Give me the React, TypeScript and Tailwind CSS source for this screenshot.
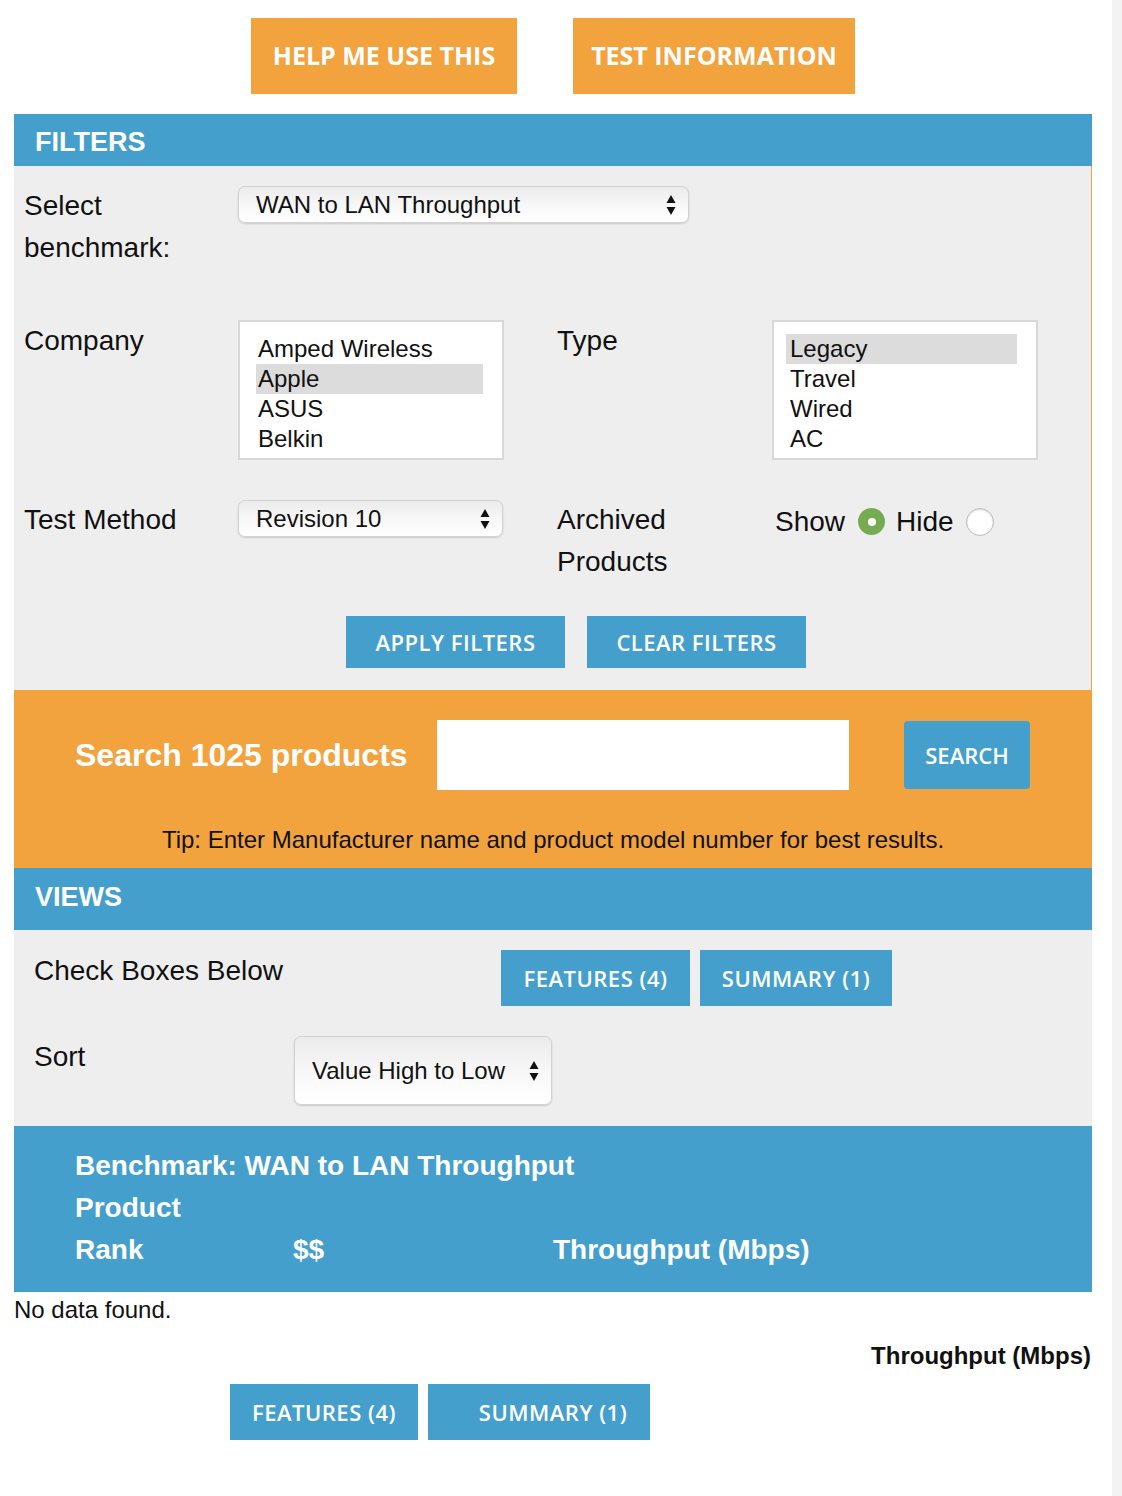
import { FC } from "react";

const SANS = "font-['Liberation_Sans',Arial,sans-serif]";
const BTN = "font-['Open_Sans',sans-serif]";

const Arrows: FC = () => (
  <svg width="10" height="22" viewBox="0 0 10 22" className="shrink-0">
    <path d="M5 1 L9.5 9 L0.5 9 Z" fill="#111" />
    <path d="M0.5 13 L9.5 13 L5 21 Z" fill="#111" />
  </svg>
);

const FakeSelect: FC<{ label: string; className?: string; text?: string }> = ({
  label,
  className = "",
  text = "text-[24px]",
}) => (
  <div
    className={`flex items-center justify-between rounded-[7px] border border-[#d2d2d2] bg-gradient-to-b from-[#ebebeb] via-[#f7f7f7] to-white shadow-[0_1px_2px_rgba(0,0,0,0.15)] pl-[17px] pr-[12px] ${text} ${className}`}
  >
    <span className="leading-none text-[#111]">{label}</span>
    <Arrows />
  </div>
);

const ListBox: FC<{ items: string[]; selected: number; pad: string; item: string }> = ({
  items,
  selected,
  pad,
  item,
}) => (
  <div className={`h-[140px] w-[266px] border-2 border-[#d8d8d8] bg-white pt-[12px] pr-[19px] ${pad}`}>
    {items.map((name, i) => (
      <div
        key={name}
        className={`h-[30px] text-[24px] leading-[30px] text-[#111] ${item} ${i === selected ? "bg-[#dcdcdc]" : ""}`}
      >
        {name}
      </div>
    ))}
  </div>
);

const BlueBtn: FC<{ label: string; className?: string }> = ({ label, className = "" }) => (
  <div
    className={`flex items-center justify-center bg-[#449fcd] text-[22px] font-semibold tracking-[0.5px] text-white ${BTN} ${className}`}
  >
    {label}
  </div>
);

const Header: FC<{ title: string; className?: string }> = ({ title, className = "" }) => (
  <div className={`flex items-center bg-[#449fcd] pl-[21px] text-[27px] font-bold text-white ${className}`}>
    {title}
  </div>
);

export default function App() {
  return (
    <div className={`flex min-h-[1496px] w-[1122px] bg-white ${SANS} text-[#111]`}>
      <div className="w-[1112px] pl-[14px] pr-[20px]">
        {/* top buttons */}
        <div className="flex justify-center gap-[56px] pt-[18px] pb-[20px]">
          <div
            className={`flex h-[76px] w-[266px] items-center justify-center bg-[#f2a33e] text-[25px] font-bold text-white ${BTN}`}
          >
            HELP ME USE THIS
          </div>
          <div
            className={`flex h-[76px] w-[282px] items-center justify-center bg-[#f2a33e] text-[25px] font-bold text-white ${BTN}`}
          >
            TEST INFORMATION
          </div>
        </div>

        {/* filters */}
        <Header title="FILTERS" className="h-[52px] pt-[5px]" />
        <div className="border-r border-[#f2a33e] bg-[#eeeeee] pl-[10px] pt-[19px] pb-[22px] text-[28px] leading-[42px]">
          <div className="grid grid-cols-[214px_319px_215px_1fr]">
            <div>
              Select
              <br />
              benchmark:
            </div>
            <div className="col-span-3">
              <FakeSelect label="WAN to LAN Throughput" className="mt-[1px] h-[37px] w-[451px]" />
            </div>
          </div>

          <div className="mt-[51px] grid grid-cols-[214px_319px_215px_1fr]">
            <div>Company</div>
            <ListBox
              items={["Amped Wireless", "Apple", "ASUS", "Belkin"]}
              selected={1}
              pad="pl-[16px]"
              item="pl-[2px]"
            />
            <div>Type</div>
            <ListBox items={["Legacy", "Travel", "Wired", "AC"]} selected={0} pad="pl-[12px]" item="pl-[4px]" />
          </div>

          <div className="mt-[39px] grid grid-cols-[214px_319px_215px_1fr]">
            <div>Test Method</div>
            <div>
              <FakeSelect label="Revision 10" className="mt-[1px] h-[37px] w-[265px]" />
            </div>
            <div>
              Archived
              <br />
              Products
            </div>
            <div className="flex h-[42px] items-center pl-[3px] pt-[3px]">
              <span>Show</span>
              <span className="ml-[13px] flex h-[27px] w-[27px] items-center justify-center rounded-full bg-[#77ab52]">
                <span className="h-[8px] w-[8px] rounded-full bg-white" />
              </span>
              <span className="ml-[11px]">Hide</span>
              <span className="ml-[12px] h-[28px] w-[28px] rounded-full border border-[#bdbdbd] bg-white shadow-[inset_0_1px_2px_rgba(0,0,0,0.15)]" />
            </div>
          </div>

          <div className="mt-[33px] flex gap-[22px] pl-[322px]">
            <BlueBtn label="APPLY FILTERS" className="h-[52px] w-[219px]" />
            <BlueBtn label="CLEAR FILTERS" className="h-[52px] w-[219px]" />
          </div>
        </div>

        {/* search */}
        <div className="bg-[#f2a33e] pt-[30px] pb-[13px]">
          <div className="flex items-center">
            <div className="ml-[61px] w-[362px] text-[32px] font-bold text-white">Search 1025 products</div>
            <div className="h-[70px] w-[412px] bg-white" />
            <div
              className={`ml-[55px] flex h-[68px] w-[126px] items-center justify-center rounded-[4px] bg-[#449fcd] text-[22px] font-semibold text-white ${BTN}`}
            >
              SEARCH
            </div>
          </div>
          <div className="mt-[35px] text-center text-[24px] leading-[30px]">
            Tip: Enter Manufacturer name and product model number for best results.
          </div>
        </div>

        {/* views */}
        <Header title="VIEWS" className="h-[62px] pb-[3px]" />
        <div className="bg-[#eeeeee] pl-[20px] pt-[20px] pb-[21px] text-[28px]">
          <div className="flex">
            <div className="w-[467px] leading-[42px]">Check Boxes Below</div>
            <div className="flex gap-[10px]">
              <BlueBtn label="FEATURES (4)" className="h-[56px] w-[189px]" />
              <BlueBtn label="SUMMARY (1)" className="h-[56px] w-[192px]" />
            </div>
          </div>
          <div className="mt-[30px] flex">
            <div className="w-[260px] leading-[42px]">Sort</div>
            <FakeSelect
              label="Value High to Low"
              text="text-[24px]"
              className="h-[69px] w-[258px] pl-[16px] pr-[10px] from-[#e6e6e6] via-[#f3f3f3]"
            />
          </div>
        </div>

        {/* result header */}
        <div className="bg-[#449fcd] pl-[61px] pt-[19px] pb-[21px] text-[28px] font-bold leading-[42px] text-white">
          <div>Benchmark: WAN to LAN Throughput</div>
          <div>Product</div>
          <div className="flex">
            <span className="w-[218px]">Rank</span>
            <span className="w-[260px]">$$</span>
            <span>Throughput (Mbps)</span>
          </div>
        </div>

        <div className="pt-[3px] text-[24px] leading-[30px]">No data found.</div>
        <div className="mt-[16px] pr-[1px] text-right text-[24px] font-bold leading-[30px]">Throughput (Mbps)</div>

        <div className="mt-[13px] flex gap-[10px] pl-[216px]">
          <BlueBtn label="FEATURES (4)" className="h-[56px] w-[188px]" />
          <BlueBtn label="SUMMARY (1)" className="h-[56px] w-[222px] pl-[28px]" />
        </div>
      </div>
      <div className="w-[10px] bg-[#f3f3f3]" />
    </div>
  );
}
